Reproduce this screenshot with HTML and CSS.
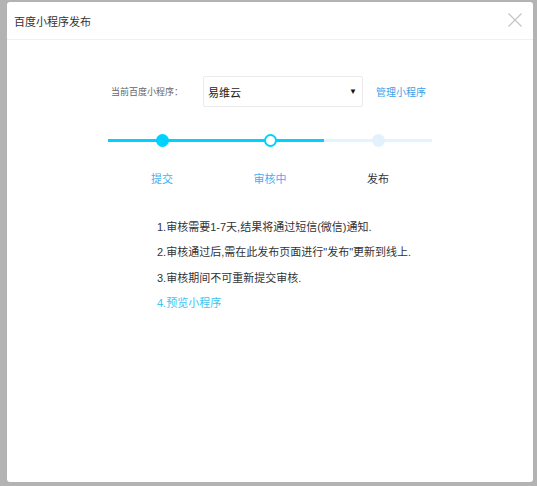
FILE: index.html
```html
<!DOCTYPE html>
<html lang="zh">
<head>
<meta charset="utf-8">
<title>百度小程序发布</title>
<link rel="stylesheet" href="styles.css">
</head>
<body>
<div class="modal">
  <div class="modal-header">
    <span class="modal-title">百度小程序发布</span>
    <span class="close">
      <svg width="14" height="14" viewBox="0 0 14 14"><path d="M0.5 0.5L13.5 13.5M13.5 0.5L0.5 13.5" stroke="#c4c4c4" stroke-width="1.2" fill="none"/></svg>
    </span>
  </div>
  <div class="modal-body">
    <div class="app-row">
      <span class="app-label">当前百度小程序：</span>
      <div class="select">
        <span class="select-value">易维云</span>
        <span class="select-arrow">▼</span>
      </div>
      <a class="manage-link">管理小程序</a>
    </div>
    <div class="steps">
      <div class="step done">
        <div class="track"><span class="dot"></span></div>
        <span class="step-label">提交</span>
      </div>
      <div class="step current">
        <div class="track"><span class="dot"></span></div>
        <span class="step-label">审核中</span>
      </div>
      <div class="step todo">
        <div class="track"><span class="dot"></span></div>
        <span class="step-label">发布</span>
      </div>
    </div>
    <div class="notes">
      <p>1.审核需要1-7天,结果将通过短信(微信)通知.</p>
      <p>2.审核通过后,需在此发布页面进行"发布"更新到线上.</p>
      <p>3.审核期间不可重新提交审核.</p>
      <p class="preview">4.预览小程序</p>
    </div>
  </div>
</div>
</body>
</html>
```

FILE: styles.css
```css
html, body {
  margin: 0;
  padding: 0;
}
body {
  width: 537px;
  height: 486px;
  background: #b3b3b3;
  font-family: "Liberation Sans", "Noto Sans CJK SC", sans-serif;
  overflow: hidden;
  box-sizing: border-box;
  padding-top: 2px;
  padding-left: 7px;
}
.modal {
  width: 526px;
  height: 480px;
  background: #fff;
  border-radius: 3px;
  display: flex;
  flex-direction: column;
}
.modal-header {
  height: 35px;
  border-bottom: 1px solid #f0f0f0;
  display: flex;
  align-items: center;
  justify-content: space-between;
  padding: 2px 11px 0 7px;
}
.modal-title {
  font-size: 11px;
  color: #333;
  line-height: 14px;
}
.close {
  display: flex;
  margin-top: -3px;
}
.modal-body {
  display: flex;
  flex-direction: column;
}
.app-row {
  display: flex;
  align-items: center;
  margin-top: 36px;
  padding-left: 104px;
}
.app-label {
  font-size: 9px;
  color: #666;
  width: 92px;
}
.select {
  width: 149px;
  height: 29px;
  border: 1px solid #ebebeb;
  border-radius: 2px;
  display: flex;
  align-items: center;
  justify-content: space-between;
  padding: 0 5px 0 4px;
}
.select-value {
  font-size: 11px;
  color: #222;
}
.select-arrow {
  font-size: 8px;
  color: #111;
}
.manage-link {
  margin-left: 13px;
  font-size: 10px;
  color: #3b9ee8;
}
.steps {
  display: flex;
  margin-top: 27px;
  margin-left: 101px;
  width: 324px;
}
.step {
  flex: 1;
  display: flex;
  flex-direction: column;
  align-items: center;
}
.track {
  width: 100%;
  height: 13px;
  display: flex;
  justify-content: center;
  background: linear-gradient(#00d2ff, #00d2ff) center / 100% 3px no-repeat;
}
.step.todo .track {
  background: linear-gradient(#e4f3fd, #e4f3fd) center / 100% 3px no-repeat;
}
.dot {
  width: 13px;
  height: 13px;
  border-radius: 50%;
  background: #00d2ff;
  box-sizing: border-box;
}
.step.current .dot {
  background: #fff;
  border: 2.5px solid #00d2ff;
}
.step.todo .dot {
  background: #e2f1fc;
}
.step-label {
  margin-top: 25px;
  font-size: 11px;
  line-height: 15px;
  color: #46aef4;
}
.step.todo .step-label {
  color: #333;
}
.notes {
  margin-top: 28px;
  padding-left: 150px;
}
.notes p {
  margin: 0;
  font-size: 11px;
  line-height: 25.3px;
  color: #333;
}
.notes p.preview {
  color: #36c6f4;
}
```
